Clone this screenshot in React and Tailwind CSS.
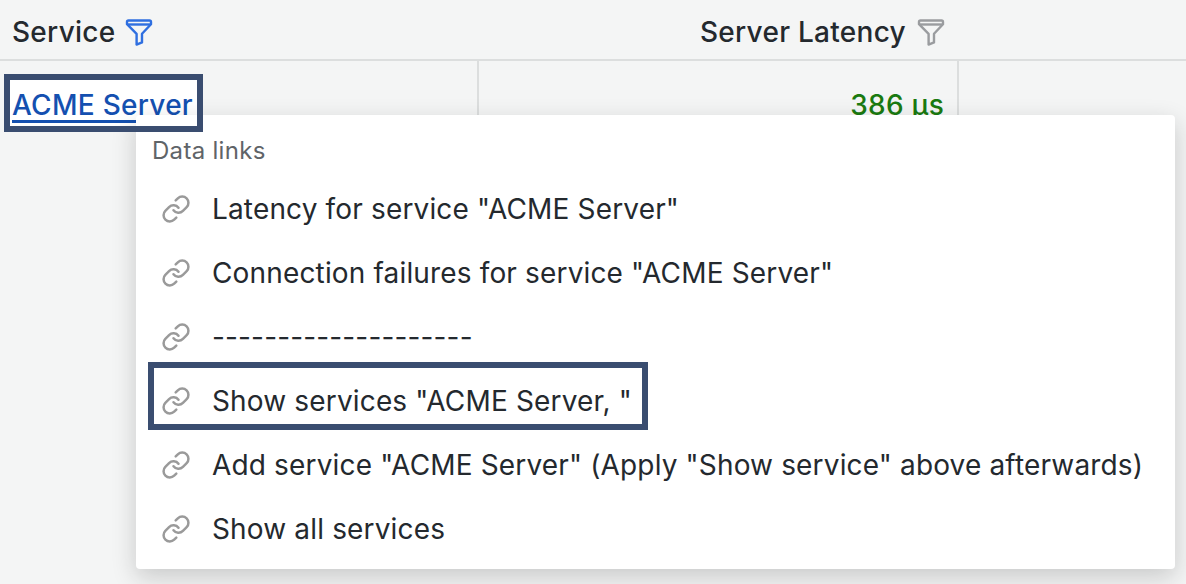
const items = [
  'Latency for service "ACME Server"',
  'Connection failures for service "ACME Server"',
  "--------------------",
  'Show services "ACME Server, "',
  'Add service "ACME Server" (Apply "Show service" above afterwards)',
  "Show all services",
];

function FilterIcon({ className }) {
  return (
    <svg viewBox="0 0 28 28" fill="none" stroke="currentColor" strokeWidth="2.4" strokeLinejoin="round" className={className}>
      <path d="M3.5 2.5h21a1.5 1.5 0 0 1 1.5 1.5v2.2L17 15.8v8.6l-5.4 2.2V15.8L2 6.2V4a1.5 1.5 0 0 1 1.5-1.5Z" />
      <path d="M2.5 6.5h23" />
    </svg>
  );
}

function LinkIcon() {
  return (
    <svg viewBox="0 0 24 24" fill="none" stroke="currentColor" strokeWidth="2" strokeLinecap="round" className="w-[30px] h-[30px] text-[#9a9a9a] shrink-0">
      <path d="M10 13a5 5 0 0 0 7.54.54l3-3a5 5 0 0 0-7.07-7.07l-1.72 1.71" />
      <path d="M14 11a5 5 0 0 0-7.54-.54l-3 3a5 5 0 0 0 7.07 7.07l1.71-1.71" />
    </svg>
  );
}

export default function App() {
  return (
    <div className="relative w-[1186px] h-[584px] overflow-hidden bg-[#f4f5f5] font-['Inter',sans-serif] text-[#24292e]">
      <div className="flex h-[61px] border-b-2 border-[#dcdede] text-[28px] font-medium tracking-[0.28px]">
        <div className="w-[479px] flex items-center gap-[9px] pl-3 pt-[4px]">
          <span>Service</span>
          <FilterIcon className="w-7 h-7 text-[#2f6fe0]" />
        </div>
        <div className="w-[480px] flex items-center justify-end gap-[11px] pr-[14px] pt-[4px]">
          <span>Server Latency</span>
          <FilterIcon className="w-7 h-7 text-[#9a9c9f]" />
        </div>
      </div>

      <div className="flex h-[70px] text-[28px] font-medium tracking-[0.28px]">
        <div className="w-[479px] border-r-2 border-[#dcdede] pl-[10px] pt-[19px]">
          <div className="relative inline-block">
            <a href="#" className="block h-[46px] bg-white pl-[2px] pr-[4px] pt-[8px] leading-[34px] text-[#1450b0] underline underline-offset-[5px] decoration-[3px]">
              ACME Server
            </a>
            <div className="absolute -inset-[6px] z-20 border-[6px] border-[#3a4d70] pointer-events-none" />
          </div>
        </div>
        <div className="w-[480px] border-r-2 border-[#dcdede] pr-[13px] pt-[27px] text-right leading-[34px] text-[#1a7a10]">
          386 µs
        </div>
      </div>

      <div className="absolute left-[136px] top-[115px] z-10 w-[1039px] h-[454px] rounded-[4px] bg-white shadow-[0_8px_24px_rgba(24,26,27,0.2)]">
        <div className="pl-4 pt-[21px] h-[62px] text-[24px] leading-[30px] tracking-[0.3px] text-[#5f6468]">Data links</div>
        {items.map((label) => (
          <div key={label} className="relative flex items-center h-16 pl-[25px] gap-[21px] text-[28px] tracking-[0.155px]">
            <LinkIcon />
            <span className="whitespace-nowrap">{label}</span>
            {label.startsWith("Show services") && (
              <div className="absolute left-[12px] top-[-7px] w-[500px] h-[68px] border-[6px] border-[#3a4d70] pointer-events-none" />
            )}
          </div>
        ))}
      </div>
    </div>
  );
}
